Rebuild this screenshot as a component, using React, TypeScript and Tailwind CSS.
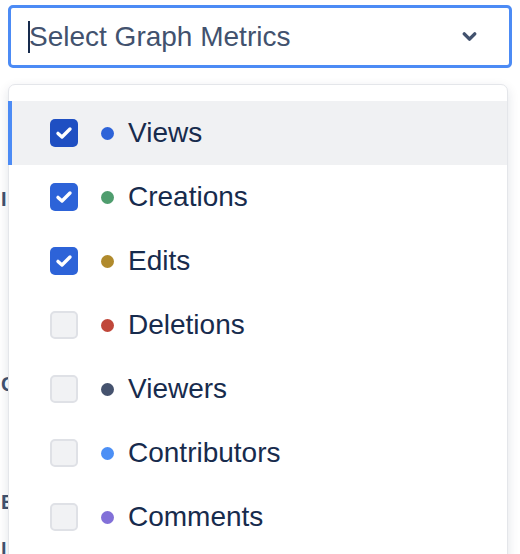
import { ChevronDown } from "lucide-react";

const metrics = [
  { name: "Views", color: "bg-[#2d63d8]", checked: true, active: true },
  { name: "Creations", color: "bg-[#4f9d6e]", checked: true },
  { name: "Edits", color: "bg-[#b08a2c]", checked: true },
  { name: "Deletions", color: "bg-[#c0473a]", checked: false },
  { name: "Viewers", color: "bg-[#45526e]", checked: false },
  { name: "Contributors", color: "bg-[#4c8ff5]", checked: false },
  { name: "Comments", color: "bg-[#8270d8]", checked: false },
];

function Checkbox({ checked, active }: { checked: boolean; active?: boolean }) {
  if (!checked) {
    return <span className="w-[28px] h-[28px] rounded-[5px] border-2 border-[#dfe1e6] bg-[#f1f2f4]" />;
  }
  return (
    <span
      className={`w-[28px] h-[28px] rounded-[5px] flex items-center justify-center ${
        active ? "bg-[#1f4fc2]" : "bg-[#2d63d8]"
      }`}
    >
      <svg width="18" height="14" viewBox="0 0 18 14" fill="none">
        <path d="M3 7.4 L7 11 L15 3" stroke="white" strokeWidth="3.4" strokeLinecap="round" strokeLinejoin="round" />
      </svg>
    </span>
  );
}

export default function App() {
  return (
    <div className="relative w-[520px] h-[554px] overflow-hidden bg-white font-['Liberation_Sans',Arial,sans-serif]">
      {/* select */}
      <div className="pt-[5px] px-[8px]">
        <div className="h-[63px] rounded-[5px] border-[3px] border-[#4c8bf5] flex items-center pl-[17px] pr-[29px]">
          <span className="w-[2px] h-[32px] bg-[#172b4d]" />
          <span className="flex-1 text-[28px] text-[#42526e] -ml-[1px]">Select Graph Metrics</span>
          <ChevronDown className="w-[21px] h-[21px] text-[#42526e]" strokeWidth={4} />
        </div>
      </div>

      {/* page labels behind the menu */}
      <div className="pl-[1px] text-[20px] font-bold text-[#42526e] leading-none">
        <div className="pt-[121px]">I</div>
        <div className="pt-[165px]">C</div>
        <div className="pt-[98px]">E</div>
        <div className="pt-[28px]">l</div>
      </div>

      {/* menu */}
      <div className="absolute left-[8px] top-[84px] w-[500px] h-[520px] bg-white border border-[#e4e6ea] rounded-[7px] shadow-[0_4px_12px_rgba(9,30,66,0.12)] pt-[16px]">
        {metrics.map((m) => (
          <div
            key={m.name}
            className={`h-[64px] flex items-center pl-[38px] border-l-[4px] -ml-px ${
              m.active ? "bg-[#f0f1f3] border-[#4c8bf5]" : "border-transparent"
            }`}
          >
            <Checkbox checked={m.checked} active={m.active} />
            <span className={`w-[13px] h-[13px] rounded-full ml-[23px] ${m.color}`} />
            <span className="ml-[14px] text-[28px] text-[#172b4d]">{m.name}</span>
          </div>
        ))}
      </div>
    </div>
  );
}
